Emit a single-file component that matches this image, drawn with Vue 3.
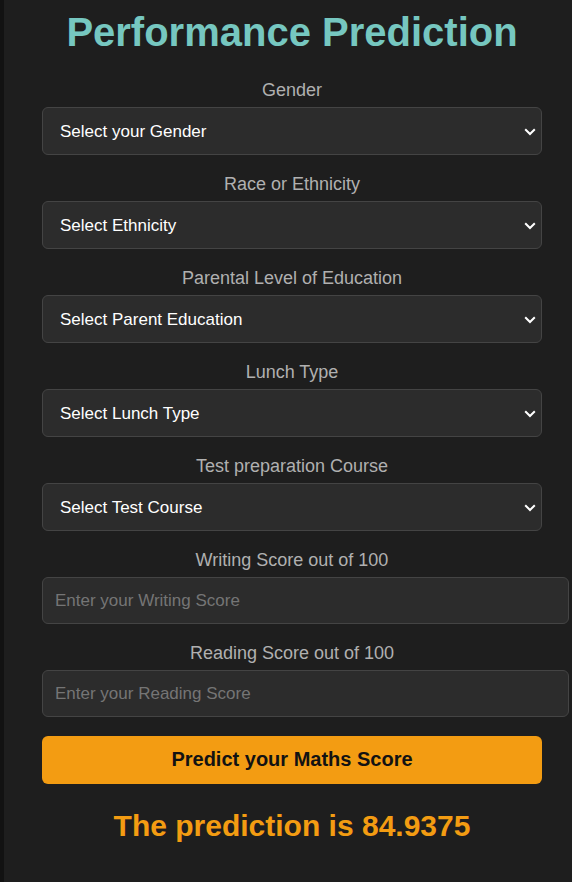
<script setup>
import { reactive } from 'vue'

const selects = [
  { id: 'gender', label: 'Gender', placeholder: 'Select your Gender', options: ['Male', 'Female'] },
  { id: 'ethnicity', label: 'Race or Ethnicity', placeholder: 'Select Ethnicity', options: ['Group A', 'Group B', 'Group C', 'Group D', 'Group E'] },
  { id: 'education', label: 'Parental Level of Education', placeholder: 'Select Parent Education', options: ["associate's degree", "bachelor's degree", 'high school', "master's degree", 'some college', 'some high school'] },
  { id: 'lunch', label: 'Lunch Type', placeholder: 'Select Lunch Type', options: ['free/reduced', 'standard'] },
  { id: 'course', label: 'Test preparation Course', placeholder: 'Select Test Course', options: ['None', 'Completed'] }
]

const scores = [
  { id: 'writing', label: 'Writing Score out of 100', placeholder: 'Enter your Writing Score' },
  { id: 'reading', label: 'Reading Score out of 100', placeholder: 'Enter your Reading Score' }
]

const form = reactive({
  gender: '', ethnicity: '', education: '', lunch: '', course: '', writing: '', reading: ''
})
const prediction = 84.9375
</script>

<template>
  <main class="panel">
    <h1 class="title">Performance Prediction</h1>
    <form class="form" @submit.prevent>
      <div v-for="s in selects" :key="s.id" class="field">
        <label class="label" :for="s.id">{{ s.label }}</label>
        <div class="select-wrap">
          <select :id="s.id" v-model="form[s.id]" class="control select">
            <option value="">{{ s.placeholder }}</option>
            <option v-for="o in s.options" :key="o" :value="o">{{ o }}</option>
          </select>
          <svg class="chevron" viewBox="0 0 12 8" width="12" height="8" aria-hidden="true">
            <path d="M1.2 1.2 L6 6 L10.8 1.2" fill="none" stroke="#fff" stroke-width="2" />
          </svg>
        </div>
      </div>
      <div v-for="s in scores" :key="s.id" class="field">
        <label class="label" :for="s.id">{{ s.label }}</label>
        <input :id="s.id" v-model="form[s.id]" class="control input" type="number" min="0" max="100" :placeholder="s.placeholder">
      </div>
      <button class="submit" type="submit">Predict your Maths Score</button>
    </form>
    <h2 class="result">The prediction is {{ prediction }}</h2>
  </main>
</template>

<style>
body {
  background: #1e1e1e;
}
</style>

<style scoped>
.panel {
  box-sizing: border-box;
  min-height: 100vh;
  padding: 8px 30px 38px 38px;
  border-left: 4px solid #121212;
  background: #1e1e1e;
  font-family: "Liberation Sans", Arial, sans-serif;
  text-align: center;
}
.title {
  margin: 0 0 24px;
  color: #76c7c0;
  font-size: 40px;
  line-height: 48px;
  white-space: nowrap;
}
.form {
  display: flex;
  flex-direction: column;
}
.field {
  display: flex;
  flex-direction: column;
  margin-bottom: 19px;
}
.label {
  margin-bottom: 7px;
  color: #b0b0b0;
  font-size: 18px;
  line-height: 20px;
}
.select-wrap {
  position: relative;
  display: flex;
}
.control {
  box-sizing: border-box;
  width: 100%;
  height: 48px;
  padding: 12px;
  border: 1px solid #444;
  border-radius: 6px;
  background-color: #2c2c2c;
  color: #fff;
  font-family: inherit;
  font-size: 17px;
}
.select {
  appearance: none;
  padding: 0 24px 0 17px;
}
.chevron {
  position: absolute;
  top: 21px;
  right: 6px;
  pointer-events: none;
}
.input {
  box-sizing: content-box;
  height: 21px;
  padding-right: 13px;
}
.input::placeholder {
  color: #757575;
}
.submit {
  height: 48px;
  padding: 0 12px 2px;
  border: 0;
  border-radius: 6px;
  background: #f39c12;
  color: #121212;
  font-family: inherit;
  font-size: 20px;
  font-weight: bold;
}
.result {
  margin: 24px 0 0;
  color: #f39c12;
  font-size: 30px;
  line-height: 36px;
}
</style>
